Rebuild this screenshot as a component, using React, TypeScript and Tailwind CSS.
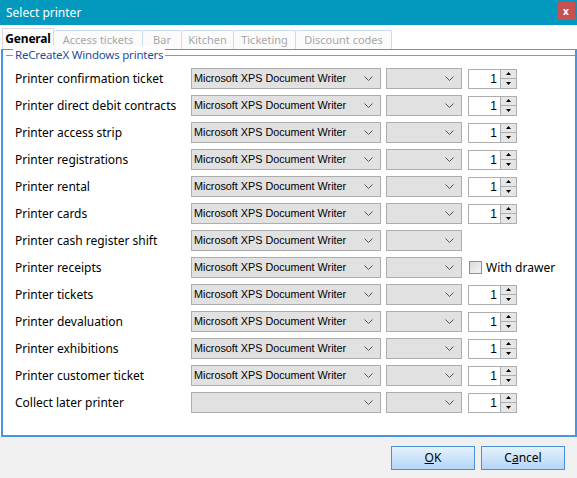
import React from 'react';

type Row = { label: string; printer: string; spin: 'spin' | 'none' | 'drawer' };

const rows: Row[] = [
  { label: 'Printer confirmation ticket', printer: 'Microsoft XPS Document Writer', spin: 'spin' },
  { label: 'Printer direct debit contracts', printer: 'Microsoft XPS Document Writer', spin: 'spin' },
  { label: 'Printer access strip', printer: 'Microsoft XPS Document Writer', spin: 'spin' },
  { label: 'Printer registrations', printer: 'Microsoft XPS Document Writer', spin: 'spin' },
  { label: 'Printer rental', printer: 'Microsoft XPS Document Writer', spin: 'spin' },
  { label: 'Printer cards', printer: 'Microsoft XPS Document Writer', spin: 'spin' },
  { label: 'Printer cash register shift', printer: 'Microsoft XPS Document Writer', spin: 'none' },
  { label: 'Printer receipts', printer: 'Microsoft XPS Document Writer', spin: 'drawer' },
  { label: 'Printer tickets', printer: 'Microsoft XPS Document Writer', spin: 'spin' },
  { label: 'Printer devaluation', printer: 'Microsoft XPS Document Writer', spin: 'spin' },
  { label: 'Printer exhibitions', printer: 'Microsoft XPS Document Writer', spin: 'spin' },
  { label: 'Printer customer ticket', printer: 'Microsoft XPS Document Writer', spin: 'spin' },
  { label: 'Collect later printer', printer: '', spin: 'spin' },
];

const tabs = [
  { name: 'Access tickets', w: 'w-[89px]' },
  { name: 'Bar', w: 'w-[39px]' },
  { name: 'Kitchen', w: 'w-[52px]' },
  { name: 'Ticketing', w: 'w-[62px]' },
  { name: 'Discount codes', w: 'w-[96px]' },
];

const ui = "font-['Noto_Sans',sans-serif]";
const ms = "font-['Liberation_Sans',Arial,sans-serif]";

function Chevron() {
  return (
    <svg width="9" height="5" viewBox="0 0 9 5" className="shrink-0">
      <path d="M0.5 0.5 L4.5 4.5 L8.5 0.5" fill="none" stroke="#555" strokeWidth="1" />
    </svg>
  );
}

function Combo({ text, width }: { text: string; width: string }) {
  return (
    <div className={`${width} h-[21px] bg-[#e1e1e1] border border-[#adadad] flex items-center pl-[2px] pr-[7px]`}>
      <span className={`${ms} text-[10.8px] text-black flex-1 truncate leading-none`}>{text}</span>
      <Chevron />
    </div>
  );
}

function Spinner() {
  return (
    <div className="w-[49px] h-[20px] bg-white border border-[#adadad] flex">
      <div className={`${ms} flex-1 text-right pr-[3px] text-[12px] leading-[18px] text-black`}>1</div>
      <div className="w-[16px] flex flex-col border-l border-[#adadad] bg-[#e6e6e6]">
        <div className="flex-1 flex items-center justify-center border-b border-[#adadad]">
          <svg width="5" height="3" viewBox="0 0 5 3"><path d="M2.5 0 L5 3 L0 3 Z" fill="#000" /></svg>
        </div>
        <div className="flex-1 flex items-center justify-center">
          <svg width="5" height="3" viewBox="0 0 5 3"><path d="M0 0 L5 0 L2.5 3 Z" fill="#000" /></svg>
        </div>
      </div>
    </div>
  );
}

export default function App() {
  return (
    <div className={`w-[577px] h-[478px] flex flex-col bg-[#f0f0f0] ${ui} overflow-hidden`}>
      {/* Title bar */}
      <div className="h-[25px] bg-[#0399be] flex items-center justify-between pl-[6px] pr-[2px]">
        <span className="text-white text-[12px]">Select printer</span>
        <div className="w-[18px] h-[18px] mt-[-4px] bg-[#c75050] flex items-center justify-center text-white text-[10px] font-bold leading-none">
          x
        </div>
      </div>

      {/* Tab area */}
      <div className="h-[412px] bg-white flex flex-col pt-[3px]">
        <div className="flex items-end h-[21px] pl-[2px]">
          <div className="w-[52px] h-[21px] border border-b-0 border-[#d9d9d9] bg-white flex items-center justify-center text-[12px] font-bold text-black tracking-[-0.2px]">
            General
          </div>
          {tabs.map((t) => (
            <div
              key={t.name}
              className={`${t.w} h-[19px] border border-b-0 border-l-0 border-[#c7dcf0] rounded-t-[2px] bg-[#fbfbfb] flex items-center justify-center text-[11px] text-[#a8a8a8] whitespace-nowrap`}
            >
              {t.name}
            </div>
          ))}
        </div>

        {/* Tab page */}
        <div className="flex-1 border-t border-[#3e9ff0] border-x-2 border-b-2 border-x-[#4a94e4] border-b-[#4a94e4] ml-[1px] pt-[5px] relative">
          <div className="h-full border-t border-[#7f9db9] ml-[3px] relative">
            <span className="absolute -top-[10px] left-[7px] bg-white px-[2px] text-[11.5px] text-[#1c4f9c] leading-[18px] tracking-[-0.2px]">
              ReCreateX Windows printers
            </span>
            <div className="flex flex-col gap-[6px] pt-[12px] pl-[9px]">
              {rows.map((r) => (
                <div key={r.label} className="flex items-center h-[21px]">
                  <div className="w-[176px] text-[12px] text-black">{r.label}</div>
                  <Combo text={r.printer} width="w-[190px]" />
                  <div className="w-[5px]" />
                  <Combo text="" width="w-[76px]" />
                  <div className="w-[6px]" />
                  {r.spin === 'spin' && <Spinner />}
                  {r.spin === 'drawer' && (
                    <div className="flex items-center gap-[4px] ml-[1px]">
                      <div className="w-[13px] h-[13px] border border-[#8f8f8f] bg-gradient-to-br from-[#dcdcdc] to-[#f4f4f4]" />
                      <span className="text-[12px] text-black">With drawer</span>
                    </div>
                  )}
                </div>
              ))}
            </div>
          </div>
        </div>
      </div>

      {/* Footer */}
      <div className="flex-1 flex justify-end items-start pt-[9px] pr-[12px] gap-[6px]">
        <button className="w-[84px] h-[24px] border border-[#4b8fd6] bg-gradient-to-b from-[#e5f1fb] to-[#b4d6f6] text-[12px] text-black">
          <span className="underline">O</span>K
        </button>
        <button className="w-[84px] h-[24px] border border-[#4b8fd6] bg-gradient-to-b from-[#e5f1fb] to-[#b4d6f6] text-[12px] text-black">
          C<span className="underline">a</span>ncel
        </button>
      </div>
    </div>
  );
}
